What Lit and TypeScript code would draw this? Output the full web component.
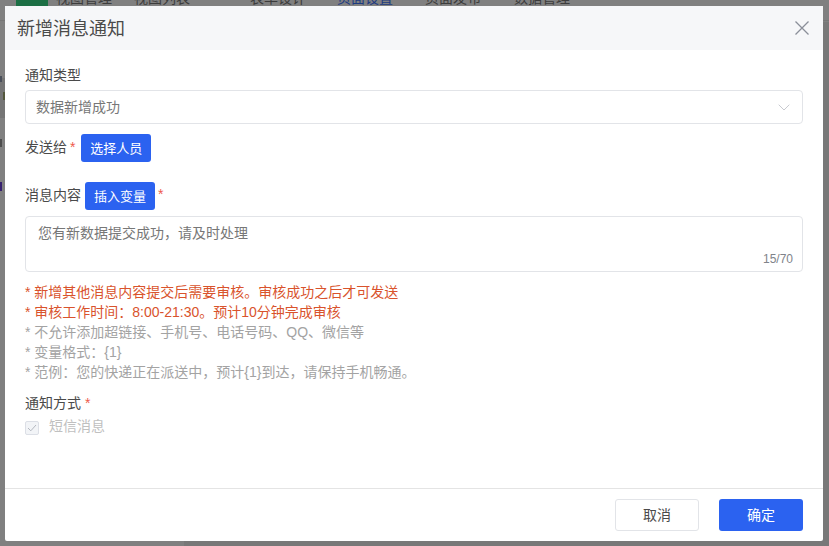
import { LitElement, html, css } from "lit";
import { customElement } from "lit/decorators.js";

@customElement("app-root")
export class AppRoot extends LitElement {
  static styles = css`
    :host {
      display: block;
      position: relative;
      width: 829px;
      height: 546px;
      overflow: hidden;
      background: #808080;
      font-family: "Liberation Sans", "Noto Sans CJK SC", sans-serif;
      font-size: 14px;
      color: #555;
    }
    * { box-sizing: border-box; }

    /* dimmed page behind the dialog */
    .nav {
      position: absolute; left: 0; right: 0; top: -12px; height: 33px;
      border-bottom: 1px solid #767676;
      color: #3c3c3c; line-height: 20px;
    }
    .nav span { position: absolute; top: 0; white-space: nowrap; }
    .nav .active { color: #1c3a80; }
    .logo {
      position: absolute; left: 16px; top: -2px; width: 32px; height: 20px;
      background: #1c6f45; padding: 5px;
    }
    .logo i { display: block; width: 100%; height: 8px; background: #5e8f75; }
    .content { position: absolute; left: 184px; right: 0; top: 22px; bottom: 0; background: #787878; }
    .strip { position: absolute; left: 0; width: 5px; }
    .s1 { top: 76px; height: 6px; width: 2px; left: 0; background: #4a4f5a; }
    .s2 { top: 78px; height: 40px; background: #757575; }
    .s3 { top: 92px; height: 8px; width: 2px; left: 3px; background: #53573c; }
    .s4 { top: 139px; height: 8px; width: 2px; left: 0; background: #4d4d4d; }
    .s5 { top: 182px; height: 9px; width: 2px; left: 0; background: #37216f; }

    .modal {
      position: absolute; left: 5px; top: 6px; width: 818px; height: 535px;
      background: #fff; border-radius: 0 0 2px 2px;
      display: flex; flex-direction: column;
    }
    .head {
      flex: none; height: 44px; background: #f6f7f9;
      display: flex; align-items: center; justify-content: space-between;
      padding: 0 13px 0 12px;
      font-size: 18px; color: #4a4a4a;
    }
    .head span { padding-bottom: 2px; }
    .head svg { display: block; }
    .body { flex: 1; padding: 0 20px; min-height: 0; }
    .label { color: #4a4a4a; line-height: 20px; }
    .star { color: #ee5a4b; }
    .type-label { margin-top: 15px; }
    .select {
      margin-top: 5px; height: 34px; width: 778px;
      border: 1px solid #e2e4e8; border-radius: 4px;
      display: flex; align-items: center; justify-content: space-between;
      padding: 0 12px 0 10px; color: #777;
    }
    .select span { padding-bottom: 2px; }
    .row { display: flex; align-items: center; height: 28px; color: #4a4a4a; }
    .row > span { padding-bottom: 5px; }
    .send { margin-top: 10px; }
    .send .star { margin-left: -1px; margin-right: 6px; }
    .msg { margin-top: 20px; gap: 4px; }
    .msg .star { margin-left: -1px; }
    .btn {
      height: 28px; width: 70px; border: 0; border-radius: 3px;
      background: #2b62f0; color: #fff; font: inherit; font-size: 13px;
      display: flex; align-items: center; justify-content: center; padding: 0 0 2px;
    }
    .textarea {
      position: relative; margin-top: 6px; height: 56px; width: 778px;
      border: 1px solid #e2e4e8; border-radius: 4px;
      padding: 6px 12px; line-height: 20px; color: #777;
    }
    .count {
      position: absolute; right: 9px; bottom: 5px;
      font-size: 12px; line-height: 14px; color: #80838a;
    }
    .hints { margin-top: 10px; line-height: 20px; color: #a3a3a3; }
    .hints .warn { color: #d9532c; }
    .way { margin-top: 11px; }
    .check {
      margin-top: 5px; height: 20px; display: flex; align-items: center; gap: 10px;
      color: #c0c0c0; line-height: 20px;
    }
    .check .text { padding-bottom: 4px; }
    .box {
      width: 14px; height: 14px; border: 1px solid #dcdfe6; border-radius: 2px;
      background: #f2f4f7; display: flex; align-items: center; justify-content: center;
    }
    .foot {
      flex: none; height: 53px; border-top: 1px solid #e4e4e4;
      display: flex; justify-content: flex-end; align-items: flex-start; gap: 20px;
      padding: 10px 20px 0 0;
    }
    .foot button {
      width: 84px; height: 32px; border-radius: 3px; font: inherit; padding: 0 0 2px;
    }
    .cancel { background: #fff; border: 1px solid #e2e4e8; color: #4a4a4a; }
    .ok { background: #2b62f0; border: 0; color: #fff; }
  `;

  render() {
    return html`
      <div class="content"></div>
      <div class="nav">
        <div class="logo"><i></i></div>
        <span style="left:56px">视图管理</span>
        <span style="left:134px">视图列表</span>
        <span style="left:250px">表单设计</span>
        <span class="active" style="left:337px">页面设置</span>
        <span style="left:425px">页面发布</span>
        <span style="left:514px">数据管理</span>
      </div>
      <div class="strip s2"></div>
      <div class="strip s1"></div>
      <div class="strip s3"></div>
      <div class="strip s4"></div>
      <div class="strip s5"></div>

      <div class="modal">
        <div class="head">
          <span>新增消息通知</span>
          <svg width="16" height="16" viewBox="0 0 16 16" fill="none" stroke="#8a8f99" stroke-width="1.3">
            <path d="M1.5 1.5 14.5 14.5M14.5 1.5 1.5 14.5" />
          </svg>
        </div>
        <div class="body">
          <div class="label type-label">通知类型</div>
          <div class="select">
            <span>数据新增成功</span>
            <svg width="12" height="7" viewBox="0 0 12 7" fill="none" stroke="#c8cad0" stroke-width="1">
              <path d="M.7.7 6 6 11.3.7" />
            </svg>
          </div>
          <div class="row send">
            <span>发送给 <span class="star">*</span></span>
            <button class="btn">选择人员</button>
          </div>
          <div class="row msg">
            <span>消息内容</span>
            <button class="btn">插入变量</button>
            <span class="star">*</span>
          </div>
          <div class="textarea">
            您有新数据提交成功，请及时处理
            <span class="count">15/70</span>
          </div>
          <div class="hints">
            <div class="warn">* 新增其他消息内容提交后需要审核。审核成功之后才可发送</div>
            <div class="warn">* 审核工作时间：8:00-21:30。预计10分钟完成审核</div>
            <div>* 不允许添加超链接、手机号、电话号码、QQ、微信等</div>
            <div>* 变量格式：{1}</div>
            <div>* 范例：您的快递正在派送中，预计{1}到达，请保持手机畅通。</div>
          </div>
          <div class="label way">通知方式<span class="star"> *</span></div>
          <div class="check">
            <span class="box">
              <svg width="10" height="8" viewBox="0 0 10 8" fill="none" stroke="#b4b8c0" stroke-width="1">
                <path d="M1 4 3.8 6.8 9 1" />
              </svg>
            </span>
            <span class="text">短信消息</span>
          </div>
        </div>
        <div class="foot">
          <button class="cancel">取消</button>
          <button class="ok">确定</button>
        </div>
      </div>
    `;
  }
}
